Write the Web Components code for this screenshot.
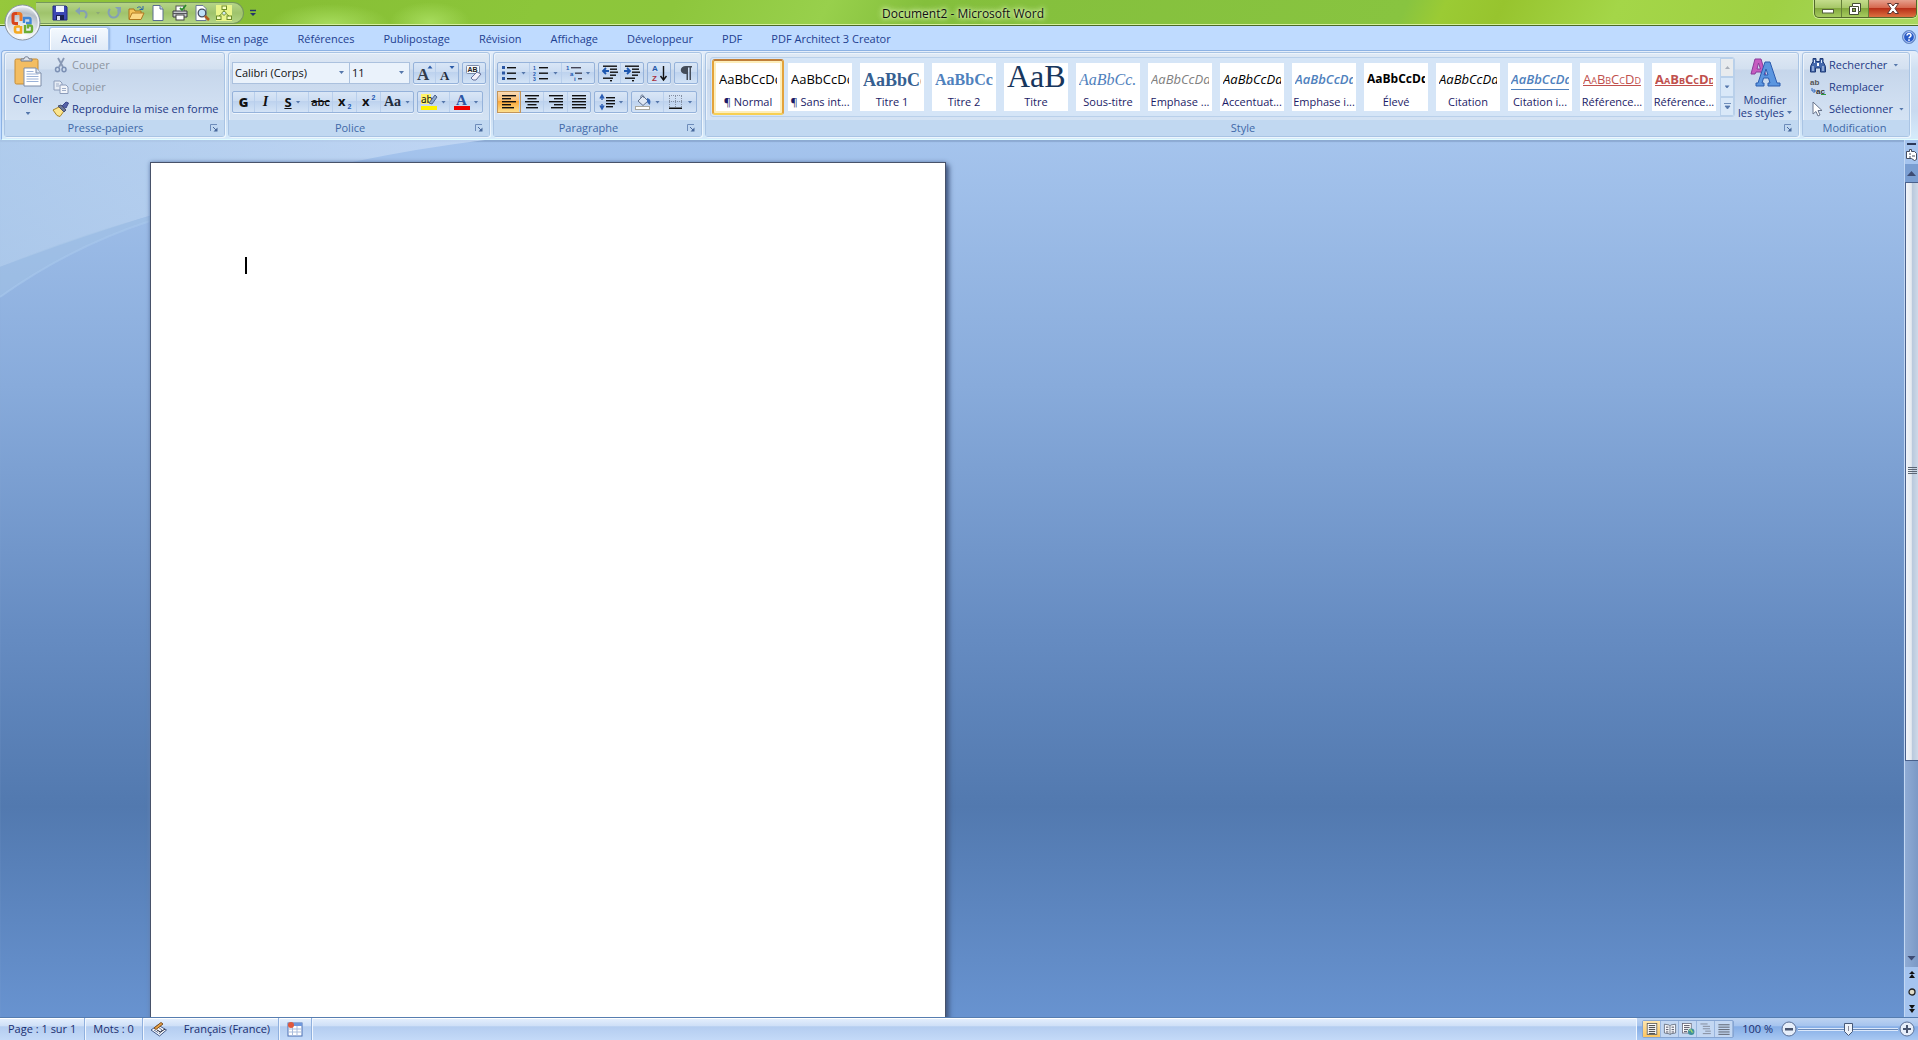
<!DOCTYPE html>
<html lang="fr">
<head>
<meta charset="utf-8">
<title>Document2 - Microsoft Word</title>
<style>
html,body{margin:0;height:100%}
body{font:11px/16px "Open Sans","Noto Sans",sans-serif;color:#1e3a86;overflow:hidden}
</style>
</head>
<body>
<word-app></word-app>
<script>
const RESET = `*{box-sizing:border-box}
button{font:inherit;color:inherit;background:none;border:0;padding:0;margin:0;display:flex;align-items:center;justify-content:center}
svg{display:block;flex:none;overflow:visible}`;

function define(tag, css, html) {
  customElements.define(tag, class extends HTMLElement {
    connectedCallback() {
      if (this.shadowRoot) return;
      const body = typeof html === 'function' ? html(this) : html;
      this.attachShadow({mode: 'open'}).innerHTML = `<style>${RESET}${css}</style>${body}`;
    }
  });
}

const lines = (rows, color = '#111') => rows.map(([x, y, w]) => `<rect x="${x}" y="${y}" width="${w}" height="1.4" fill="${color}"/>`).join('');
const letter = (t, x, y, size, extra = '') => `<text x="${x}" y="${y}" font-size="${size}" ${extra}>${t}</text>`;
const SERIF = 'font-family="Liberation Serif" font-weight="bold"';

const ICONS = {
  save: `<path d="M1 1h13l1 1v13H1z" fill="#3c46b4" stroke="#232a80"/><rect x="4" y="1" width="8" height="6" fill="#eef2ff"/><rect x="4" y="10" width="8" height="5" fill="#1b1f50"/><rect x="5" y="11" width="3" height="4" fill="#d8dcf4"/>`,
  undo: `<path d="M3 6h7a4 4 0 0 1 1 7" fill="none" stroke="#84a0b4" stroke-width="2"/><path d="M6 2L1 6l5 4z" fill="#84a0b4"/>`,
  redo: `<path d="M4 4a5 5 0 1 0 8 1" fill="none" stroke="#84a0b4" stroke-width="2.200"/><path d="M9 2h6v6z" fill="#84a0b4"/>`,
  open: `<path d="M1 14V4h5l1 2h6v3" fill="#f4c45a" stroke="#a8701c"/><path d="M1 14.500L4 8h12l-3 6.500z" fill="#fbd884" stroke="#b07820"/><path d="M9 3c2-2 4-1 5 1m1-3v3.500h-3.500" fill="none" stroke="#2e64a8"/>`,
  page: `<path d="M3 .5h7l3 3.500v11.500H3z" fill="#fff" stroke="#5a6c90"/><path d="M10 .5V4h3" fill="#cfdcf0" stroke="#5a6c90"/>`,
  print: `<rect x="4" y="1" width="8" height="6" fill="#fff" stroke="#555"/><path d="M1 6h14v6H1z" fill="#c6c8cc" stroke="#3c3c44"/><path d="M1 8.500h14" stroke="#54545c"/><rect x="4" y="10" width="8" height="5" fill="#fff" stroke="#444"/><path d="M8 3l2 2 4-5" fill="none" stroke="#2a8c2a" stroke-width="1.800"/>`,
  preview: `<path d="M2 .5h7l3 3v12H2z" fill="#fff" stroke="#6a7894"/><circle cx="8" cy="8" r="3.800" fill="#bfe0f8" stroke="#444c60" stroke-width="1.300"/><path d="M11 11l4 4" stroke="#b05c20" stroke-width="2.500"/>`,
  chart: `<rect width="16" height="16" fill="#e9f58a"/><g fill="#f6ffc0" stroke="#6c8c28"><rect x="6" y="1" width="4.500" height="3.500"/><rect x=".5" y="11" width="4.500" height="3.500"/><rect x="11" y="11" width="4.500" height="3.500"/><path d="M8 4.500v2M5.500 9L3 11M10.500 9L13 11"/><path d="M8 6l2.500 2L8 10.500 5.500 8z" fill="#cfe8f0"/></g>`,
  more: `<path d="M5 5.500h6" stroke="#24346c" stroke-width="1.400"/><path d="M5 8h6L8 11z" fill="#24346c"/>`,
  cut: `<path d="M5 1l5 9M11 1L6 10" stroke="#8898b4" stroke-width="1.800"/><ellipse cx="4.500" cy="12.500" rx="2" ry="2.300" fill="none" stroke="#7c90b4" stroke-width="1.500"/><ellipse cx="11" cy="12.500" rx="2" ry="2.300" fill="none" stroke="#7c90b4" stroke-width="1.500"/>`,
  copy: `<path d="M1 2h6l2 2v7H1z" fill="#e6ecf5" stroke="#8c9cba"/><path d="M7 6h6l2 2v6.500H7z" fill="#f2f5fa" stroke="#8c9cba"/><path d="M3 5h3M3 7h3M9 9.500h4M9 11.500h4" stroke="#a0aec8"/>`,
  brush: `<path d="M0 9l6-3 5 4-4 5.500-3-1z" fill="#fbe48c" stroke="#a98428"/><path d="M5 5l3-1 5 5-2 2z" fill="#6c7694" stroke="#4a5270"/><path d="M9 5l4-4 2.500 1L13 7z" fill="#5663a8" stroke="#39458c"/>`,
  find: `<path d="M3 1.500h3v3h4v-3h3v3l2.500 5v5.500h-5v-4H5.500v4h-5V9.500L3 4.500z" fill="#4468ac" stroke="#1f3a76"/><path d="M3 9v5M13 9v5M4.500 3v3M11.500 3v3" stroke="#dbe8fa"/><rect x="7" y="6" width="2" height="3" fill="#fff"/>`,
  replace: `${letter('ab', 0, 6, 8, 'fill="#555" font-weight="bold"')}${letter('ac', 6, 15, 8, 'fill="#333" font-weight="bold"')}<path d="M2 9v3h3m-1.500-2l2 2-2 2" fill="none" stroke="#2c62b8"/><rect x="11" y="15" width="5" height="1" fill="#2c9c3c"/>`,
  cursor: `<path d="M3 1v12l3-2.500 2 4.500 2-1-2-4.500h4z" fill="#fff" stroke="#68748c"/>`,
  grow: `${letter('A', 0, 15, 17, `fill="#333c4c" ${SERIF}`)}<path d="M10.500 3.500h5L13 .5z" fill="#2b5ba8"/>`,
  shrink: `${letter('A', 1, 15, 13, `fill="#222c3c" ${SERIF}`)}<path d="M10.500 1h5L13 4z" fill="#2b5ba8"/>`,
  clear: `<rect x=".5" y=".5" width="13" height="8" rx="1" fill="#f6f9fd" stroke="#7c8cab"/>${letter('AB', 1.5, 7, 7, 'fill="#222" font-weight="bold"')}<path d="M5 13l6-6 4 2-5 6H7z" fill="#f4f0fb" stroke="#66709a"/>`,
  sub: `${letter('x', 1, 12, 13, 'fill="#111" font-weight="bold" font-family="Noto Sans"')}${letter('2', 10.5, 15, 7, 'fill="#1d57b0" font-weight="bold"')}`,
  sup: `${letter('x', 1, 12, 13, 'fill="#111" font-weight="bold" font-family="Noto Sans"')}${letter('2', 10.5, 6, 7, 'fill="#1d57b0" font-weight="bold"')}`,
  hilite: `<rect x="0" y="0" width="10" height="10" fill="#fff36a"/>${letter('ab', 0, 8.5, 10, 'fill="#111" font-family="Noto Sans"')}<path d="M8 9l6-8 2 2-5 7z" fill="#8ea8cc" stroke="#4c628c"/><rect x="0" y="12" width="16" height="4" fill="#fff200"/>`,
  color: `${letter('A', 2, 11, 15, `fill="#2d56a4" ${SERIF}`)}<rect x="0" y="12" width="16" height="4" fill="#f00000"/>`,
  bullets: `<g fill="#2b57a4"><rect x="1" y="1" width="3" height="3"/><rect x="1" y="6.500" width="3" height="3"/><rect x="1" y="12" width="3" height="3"/></g>${lines([[6,2,9],[6,7.5,9],[6,13,9]])}`,
  numbers: `${letter('1', 0, 5, 5, 'fill="#1d57b0" font-weight="bold"')}${letter('2', 0, 10.5, 5, 'fill="#1d57b0" font-weight="bold"')}${letter('3', 0, 16, 5, 'fill="#1d57b0" font-weight="bold"')}${lines([[6,2,9],[6,7.5,9],[6,13,9]])}`,
  levels: `${letter('1', 0, 5, 6, 'fill="#1d57b0" font-weight="bold"')}${letter('a', 4, 10.5, 6, 'fill="#1d57b0" font-weight="bold"')}${letter('i', 8, 16, 6, 'fill="#1d57b0" font-weight="bold"')}${lines([[5,2,10],[9,7.5,7],[12,13,4]], '#445')}`,
  outdent: `${lines([[1,0.5,14],[8,3.5,7],[8,6.5,8],[8,9.5,6],[1,12.5,10],[8,15,2]])}<path d="M7 6H1m3-3L1 6l3 3" fill="none" stroke="#1d57b0" stroke-width="1.800"/>`,
  indent: `${lines([[1,0.5,14],[8,3.5,7],[8,6.5,8],[8,9.5,6],[1,12.5,10],[8,15,2]])}<path d="M0 6h6M3 3l3 3-3 3" fill="none" stroke="#1d57b0" stroke-width="1.800"/>`,
  sort: `${letter('A', 1, 6, 8, 'fill="#2458a8" font-weight="bold"')}${letter('Z', 1, 16, 8, 'fill="#a83040" font-weight="bold"')}<path d="M12.500 1v13M9.500 11l3 4 3-4" fill="none" stroke="#111" stroke-width="1.400"/>`,
  pilcrow: `<path d="M8 1h6v1.500h-1V15h-1.500V2.500H10V15H8.500V9C1 9.500 1 1 8 1z" fill="#444c58"/>`,
  left: lines([[1,1,14],[1,4,9],[1,7,14],[1,10,9],[1,13,12]]),
  center: lines([[1,1,14],[3.5,4,9],[1,7,14],[3.5,10,9],[2,13,12]]),
  right: lines([[1,1,14],[6,4,9],[1,7,14],[6,10,9],[3,13,12]]),
  justify: lines([[1,1,14],[1,4,14],[1,7,14],[1,10,14],[1,13,14]]),
  spacing: `<path d="M3 2v4M3 10v4M1 4.500L3 1l2 3.500M1 11.500L3 15l2-3.500" fill="none" stroke="#2b5db4" stroke-width="1.500"/>${lines([[7,3,9],[7,6,9],[7,9,9],[7,12,7]])}`,
  fill: `<path d="M3 7l5-5 5 5-5 4.500z" fill="#dfe8f4" stroke="#60708c"/><path d="M6 4c-1-4 3-4 3 0" fill="none" stroke="#60708c"/><path d="M12 4c4 1 4 4 2.500 7L12 8z" fill="#3566b4"/><rect x=".5" y="12.500" width="14" height="3" fill="#fff" stroke="#a8a8a0"/>`,
  borders: `<path d="M1.500 2v12M7.500 2v12M13.500 2v12M1 1.500h13M1 7.500h13" stroke="#8490a4" stroke-dasharray="1 1"/><rect x="1" y="13.500" width="13" height="1.500" fill="#111"/>`,
  proof: `<path d="M0 9l7-5 8.500 5-7 6z" fill="#f4f6fa" stroke="#445a88"/><path d="M7 6l4 3-3 4M3 9l4 2.500" stroke="#6b7a9c" fill="none"/><path d="M3 7l7-5.500L12 3 5 8.500z" fill="#eaa244" stroke="#7c4e20"/><path d="M6 9l3.500 2L14 8" stroke="#223" fill="none"/>`,
  macro: `<rect x="1" y="2" width="14" height="13" fill="#fff" stroke="#4c70b4"/><rect x="1" y="2" width="14" height="3" fill="#6f98dc"/><path d="M2 8h12M2 11h12M5.500 5v10M10 5v10" stroke="#a9bcdc"/><circle cx="4" cy="4" r="3" fill="#e0583c"/>`,
  vprint: `<rect x="2" y="1" width="12" height="14" fill="#fff" stroke="#555"/>${lines([[4,3,8],[4,5.5,8],[4,8,8],[4,10.5,8],[4,13,8]], '#555')}`,
  vread: `<path d="M1 2l6 1 1 1 1-1 6-1v11l-6 1-1 1-1-1-6-1zM8 4v11" fill="#f4f6fa" stroke="#5c6474"/>${lines([[3,5,3],[3,8,3],[3,11,3],[10,5,3],[10,8,3],[10,11,3]], '#667')}`,
  vweb: `<rect x="1" y="1" width="11" height="12" fill="#fff" stroke="#667"/>${lines([[3,3,7],[3,5.5,7],[3,8,5],[3,10.5,4]], '#667')}<circle cx="12" cy="11.500" r="4" fill="#3f8f9c"/><path d="M9.500 10c2-2 3 0 3 1s2 1 2 1" stroke="#9fd870" fill="none" stroke-width="1.500"/>`,
  vplan: lines([[1,1,9],[4,4,9],[4,7,9],[7,10,7],[4,13,10]], '#8c96a8'),
  vdraft: lines([[1,2,14],[1,5,14],[1,8,14],[1,11,14],[1,14,14]], '#68707e'),
};
define('w-icon', ':host{display:block;flex:none}', el =>
  `<svg width="16" height="16" viewBox="0 0 16 16" font-family="Liberation Sans" aria-hidden="true">${ICONS[el.getAttribute('name')]}</svg>`);

define('drop-arrow', ':host{display:block;width:5px;height:3px;flex:none;background:#5577ab;clip-path:polygon(0 0,100% 0,50% 100%)}', '');

define('tool-button', `
:host{display:flex;width:22px}
:host([size=m]){width:24px}
:host([arrow]){width:32px}
button{flex:1;gap:4px;color:#111;border-right:1px solid #b9cfec}
:host(:last-child) button{border-right:0}
:host([active]) button{background:linear-gradient(#fbdbb5,#fdbd6a 45%,#fba637 46%,#fddf8c);box-shadow:0 0 0 1px #c3955a}
`, el => `<button type="button" aria-label="${el.getAttribute('label')}">${
  el.hasAttribute('icon') ? `<w-icon name="${el.getAttribute('icon')}"></w-icon>` : '<slot></slot>'}${
  el.hasAttribute('arrow') ? '<drop-arrow></drop-arrow>' : ''}</button>`);

define('tool-cluster', `
:host{display:flex;height:22px;border:1px solid #95b2da;border-radius:2px;background:linear-gradient(#d9e6f6,#cbdcf2 45%,#bdd2ee 46%,#d3e3f6);box-shadow:0 1px #eef5fd}`, '<slot></slot>');

define('ribbon-group', `
:host{display:flex;flex-direction:column;flex:none;border:1px solid #a9c4e4;border-radius:3px;box-shadow:inset 1px 1px #ecf3fb,1px 1px #eef6fd;background:linear-gradient(#dfe9f5,#d3e0f0 16px,#c6d6eb 17px,#d9e7f7)}
:host([grow]){flex:1;min-width:0}
.body{flex:1;display:flex;padding:0 3px;min-width:0}
.foot{display:flex;flex:none;height:16px;align-items:center;background:#c1d8f1;color:#3f68a8;padding-right:3px}
.foot span{flex:1;text-align:center}
.foot button{width:15px;height:15px}`, el => `
<div class="body"><slot></slot></div>
<div class="foot"><span>${el.getAttribute('name')}</span>${el.hasAttribute('plain') ? '' : `<button type="button" aria-label="Options ${el.getAttribute('name')}"><svg width="8" height="8" viewBox="0 0 8 8"><path d="M.5 7V.5H7" fill="none" stroke="#6d8cba"/><path d="M3 3l3 3" stroke="#48689c"/><path d="M7.500 3.500v4h-4z" fill="#48689c"/></svg></button>`}</div>`);

define('small-command', `
:host{display:flex;height:22px}
:host([off]){color:#8d95a1}
button{gap:3px;white-space:nowrap}
drop-arrow{margin-left:3px}`, el => `<button type="button"${el.hasAttribute('off') ? ' disabled' : ''}><w-icon name="${el.getAttribute('icon')}"></w-icon><slot></slot>${el.hasAttribute('arrow') ? '<drop-arrow></drop-arrow>' : ''}</button>`);

define('clipboard-group', `
:host{display:flex;flex:none}
ribbon-group{width:221px}
.paste{width:40px;flex:none;flex-direction:column;justify-content:flex-start;padding-top:3px}
.paste span{margin:4px 0 5px}
.list{padding:1px 0 0 5px}`, `
<ribbon-group name="Presse-papiers">
<button class="paste" type="button">
<svg width="28" height="31" viewBox="0 0 28 31"><rect x="1" y="3" width="23" height="25" rx="1.500" fill="#f3bd62" stroke="#c58c34"/><path d="M7 5V3h3c0-3 5-3 5 0h3v2z" fill="#dfe3ea" stroke="#6c7890"/><path d="M10 12h12l5 5v13H10z" fill="#fff" stroke="#7c8ca8"/><path d="M22 12v5h5" fill="#dbe5f3" stroke="#7c8ca8"/><path d="M12.500 18h12M12.500 20.500h12M12.500 23h12M12.500 25.500h12M12.500 15.500h7" stroke="#9bb2d8"/></svg>
<span>Coller</span><drop-arrow></drop-arrow></button>
<div class="list">
<small-command icon="cut" off>Couper</small-command>
<small-command icon="copy" off>Copier</small-command>
<small-command icon="brush">Reproduire la mise en forme</small-command>
</div></ribbon-group>`);

const ROWS = `.rows{display:flex;flex-direction:column;gap:7px;padding-top:9px}.row{display:flex;gap:3px}`;

define('font-group', `
:host{display:flex;flex:none}${ROWS}
.combos{display:flex;width:178px;height:22px}
.combo{position:relative;display:flex;align-items:center;border:1px solid #abc1de;background:#eaf2fb;width:118px}
.combo+.combo{width:60px;border-left:0}
select{appearance:none;font:inherit;color:#111;background:none;border:0;width:100%;height:20px;padding:0 0 0 2px;outline:0}
.combo drop-arrow{position:absolute;right:5px;top:8px;pointer-events:none}
b,i,u,s{font-size:13px;font-family:"Open Sans",sans-serif}
b{font-weight:800}
i{font:italic bold 14px "Liberation Serif",serif}
u{font-weight:700}
s{font-size:11px;font-weight:600}
em{font:bold 14px "Liberation Serif",serif;color:#222c3c}`, `
<ribbon-group name="Police"><div class="rows">
<div class="row">
<div class="combos"><div class="combo"><select aria-label="Police"><option>Calibri (Corps)</option></select><drop-arrow></drop-arrow></div>
<div class="combo"><select aria-label="Taille"><option>11</option></select><drop-arrow></drop-arrow></div></div>
<tool-cluster><tool-button icon="grow" label="Agrandir la police"></tool-button><tool-button icon="shrink" label="Réduire la police"></tool-button></tool-cluster>
<tool-cluster><tool-button icon="clear" label="Effacer la mise en forme"></tool-button></tool-cluster>
</div>
<div class="row">
<tool-cluster>
<tool-button label="Gras"><b>G</b></tool-button>
<tool-button label="Italique"><i>I</i></tool-button>
<tool-button label="Souligné" arrow><u>S</u></tool-button>
<tool-button label="Barré" size="m"><s>abc</s></tool-button>
<tool-button icon="sub" label="Indice" size="m"></tool-button>
<tool-button icon="sup" label="Exposant" size="m"></tool-button>
<tool-button label="Modifier la casse" arrow><em>Aa</em></tool-button>
</tool-cluster>
<tool-cluster><tool-button icon="hilite" label="Surlignage" arrow></tool-button><tool-button icon="color" label="Couleur de police" arrow></tool-button></tool-cluster>
</div></div></ribbon-group>`);

define('paragraph-group', `:host{display:flex;flex:none}${ROWS}`, `
<ribbon-group name="Paragraphe"><div class="rows">
<div class="row">
<tool-cluster><tool-button icon="bullets" label="Puces" arrow></tool-button><tool-button icon="numbers" label="Numérotation" arrow></tool-button><tool-button icon="levels" label="Liste à plusieurs niveaux" arrow></tool-button></tool-cluster>
<tool-cluster><tool-button icon="outdent" label="Diminuer le retrait"></tool-button><tool-button icon="indent" label="Augmenter le retrait"></tool-button></tool-cluster>
<tool-cluster><tool-button icon="sort" label="Trier"></tool-button></tool-cluster>
<tool-cluster><tool-button icon="pilcrow" label="Afficher tout"></tool-button></tool-cluster>
</div>
<div class="row">
<tool-cluster><tool-button icon="left" label="Aligner à gauche" active></tool-button><tool-button icon="center" label="Centrer" size="m"></tool-button><tool-button icon="right" label="Aligner à droite" size="m"></tool-button><tool-button icon="justify" label="Justifier"></tool-button></tool-cluster>
<tool-cluster><tool-button icon="spacing" label="Interligne" arrow></tool-button></tool-cluster>
<tool-cluster><tool-button icon="fill" label="Trame de fond" arrow></tool-button><tool-button icon="borders" label="Bordures" arrow></tool-button></tool-cluster>
</div></div></ribbon-group>`);

define('style-tile', `
:host{display:flex;box-sizing:border-box;width:72px;height:56px;padding:4px;flex:none}
:host([active]){padding:2px;border:2px solid #e3a33c;border-top-color:#c07f38;border-bottom-color:#f7cf52;border-radius:3px;background:#fdeebb}
button{flex:1;flex-direction:column;justify-content:space-between;background:#fff;min-width:0;padding:3px 3px 1px;color:#1b1b66}
.sample{width:100%;height:28px;line-height:26px;overflow:hidden;white-space:nowrap;text-align:left;color:#000;font-size:13px}
.name{white-space:nowrap}
.s-h1{font:bold 18px/28px "Liberation Serif",serif;color:#365f91}
.s-h2{font:bold 16px/28px "Liberation Serif",serif;color:#4f81bd}
.s-title{font:32px/20px "Liberation Serif",serif;color:#17365d}
.s-sub{font:italic 16px/28px "Liberation Serif",serif;color:#4f81bd}
.s-soft{font-style:italic;color:#808080}
.s-it{font-style:italic}
.s-int{font-style:italic;font-weight:600;color:#4f81bd}
.s-bold{font-weight:700;font-size:12px}
.s-quote{font-style:italic;font-weight:600;color:#4f81bd;height:24px;border-bottom:1px solid #4f81bd;margin-bottom:4px}
.s-ref,.s-refb{font-variant:small-caps;text-decoration:underline;color:#c0504d}
.s-refb{font-weight:700}`, el => `<button type="button"><span class="sample s-${el.getAttribute('kind')}">${el.getAttribute('sample') || 'AaBbCcDd'}</span><span class="name"><slot></slot></span></button>`);

define('style-group', `
:host{display:flex;flex:1;min-width:0}
.gallery{flex:1;min-width:0;height:60px;margin:4px 0 0 1px;padding:1px;display:flex;border:1px solid #b9d0ea;border-radius:3px;background:#d5e5f7;overflow:hidden}
.tiles{display:flex;flex:1;min-width:0;overflow:hidden}
.scroll{display:flex;flex-direction:column;width:14px;flex:none;margin:-1px -1px -1px 0}
.scroll button{flex:1;border:1px solid #b9d0ea;background:#d9e8f8}
.scroll button:first-child{background:#e8ebee}
.scroll button:first-child drop-arrow{background:#a8aeb8}
.up{transform:rotate(180deg)}
.change{width:60px;flex:none;flex-direction:column;justify-content:flex-start;padding-top:5px;line-height:13px}
.change span{margin-top:6px;white-space:nowrap}
.change drop-arrow{display:inline-block;margin:0 0 3px 3px}`, `
<ribbon-group name="Style" grow>
<div class="gallery"><div class="tiles">
<style-tile kind="n" active>¶ Normal</style-tile>
<style-tile kind="n">¶ Sans int...</style-tile>
<style-tile kind="h1">Titre 1</style-tile>
<style-tile kind="h2" sample="AaBbCc">Titre 2</style-tile>
<style-tile kind="title" sample="AaB">Titre</style-tile>
<style-tile kind="sub" sample="AaBbCc.">Sous-titre</style-tile>
<style-tile kind="soft">Emphase ...</style-tile>
<style-tile kind="it">Accentuat...</style-tile>
<style-tile kind="int">Emphase i...</style-tile>
<style-tile kind="bold">Élevé</style-tile>
<style-tile kind="it">Citation</style-tile>
<style-tile kind="quote">Citation i...</style-tile>
<style-tile kind="ref">Référence...</style-tile>
<style-tile kind="refb">Référence...</style-tile>
</div>
<div class="scroll"><button type="button" aria-label="Ligne précédente"><drop-arrow class="up"></drop-arrow></button><button type="button" aria-label="Ligne suivante"><drop-arrow></drop-arrow></button><button type="button" aria-label="Autres"><svg width="7" height="7" viewBox="0 0 7 7"><path d="M0 .5h7M1 3h5L3.500 6z" fill="#5577ab" stroke="#5577ab" stroke-width=".8"/></svg></button></div></div>
<button class="change" type="button">
<svg width="30" height="29" viewBox="0 0 30 29"><path d="M5 1h6l5 17h-4l-1-4H6l-1 2H1zM8.500 5L7 11h3.500z" fill="#c65cc0" stroke="#8a3c9a"/><path d="M15 4h5l7 21h3v3H18v-3h2l-1.500-5h-5L12 25h2v3H6v-3h2zM16 11l-2 6h4z" fill="#5b96e0" stroke="#2c5cae"/></svg>
<span>Modifier<br>les styles<drop-arrow></drop-arrow></span></button>
</ribbon-group>`);

define('edit-group', `:host{display:flex;flex:none}ribbon-group{width:108px}.list{padding:1px 0 0 4px}`, `
<ribbon-group name="Modification" plain><div class="list">
<small-command icon="find" arrow>Rechercher</small-command>
<small-command icon="replace">Remplacer</small-command>
<small-command icon="cursor" arrow>Sélectionner</small-command>
</div></ribbon-group>`);

define('ribbon-tab', `
:host{display:flex;height:23px}
a{display:flex;align-items:center;padding:0 11px;border:1px solid transparent;border-bottom:0;border-radius:3px 3px 0 0;color:#1e4090;text-decoration:none;white-space:nowrap}
:host([active]) a{background:linear-gradient(#f4f9fe,#dfeaf7);border-color:#a5c4ee;box-shadow:inset 1px 1px #fff,1px 0 2px #8fb0dc}`, el => `<a href="#" role="tab"${el.hasAttribute('active') ? ' aria-selected="true"' : ''}><slot></slot></a>`);

define('ribbon-bar', `
:host{display:block;background:#bfdbff}
nav{display:flex;gap:5px;height:24px;align-items:flex-end;padding:0 2px 0 49px}
nav button{margin:0 0 6px auto}
.panel{display:flex;gap:3px;height:90px;padding:1px 8px 2px 2px;margin-left:1px;border:1px solid #8db2e3;border-right:0;border-bottom:1px solid #dffcff;border-radius:4px 4px 0 0;background:linear-gradient(#e5eefa,#d0e0f2 18px,#c9daf0 60px,#d6ebfb)}`, `
<nav role="tablist">
<ribbon-tab active>Accueil</ribbon-tab><ribbon-tab>Insertion</ribbon-tab><ribbon-tab>Mise en page</ribbon-tab><ribbon-tab>Références</ribbon-tab><ribbon-tab>Publipostage</ribbon-tab><ribbon-tab>Révision</ribbon-tab><ribbon-tab>Affichage</ribbon-tab><ribbon-tab>Développeur</ribbon-tab><ribbon-tab>PDF</ribbon-tab><ribbon-tab>PDF Architect 3 Creator</ribbon-tab>
<button type="button" aria-label="Aide"><svg width="14" height="14" viewBox="0 0 14 14"><circle cx="7" cy="7" r="6.500" fill="#2a5cc8" stroke="#6d8fc4"/><circle cx="7" cy="7" r="5.400" fill="none" stroke="#e8f1ff" stroke-width=".8"/><path d="M5 5.500c0-2.800 4.200-2.600 4 0 0 1.300-2 1.400-2 2.700" fill="none" stroke="#fff" stroke-width="1.500"/><rect x="6.200" y="9.300" width="1.600" height="1.600" fill="#fff"/></svg></button>
</nav>
<div class="panel"><clipboard-group></clipboard-group><font-group></font-group><paragraph-group></paragraph-group><style-group></style-group><edit-group></edit-group></div>`);

define('title-bar', `
:host{display:flex;box-sizing:border-box;height:26px;position:relative;align-items:flex-start;border-bottom:1px solid #4a6a26;box-shadow:inset 0 -1px #d6efa0;
background:radial-gradient(60px 20px at 330px 24px,#a6db5c,transparent),radial-gradient(40px 20px at 430px 22px,#a6db5c,transparent),linear-gradient(115deg,#96c83c 0,#86bd34 12%,#8cc63a 28%,#8dc63c 35%,#98d04c 43%,#84bf3c 48%,#88c440 73%,#9bcb34 75%,#97c42e 78%,#a4d648 84%,#9fd044 92%,#a8d860)}
.qat{display:flex;height:22px;margin:2px 0 0 36px;padding:0 8px 0 13px;align-items:center;border:1px solid #76985c;border-left:0;border-radius:0 11px 11px 0;background:linear-gradient(#b5d488,#9fc36c 50%,#b3d585)}
.qat button{width:22px;height:18px}
.qat .thin{width:10px}
.thin drop-arrow{background:#8da878}
.more{width:18px;height:22px;margin-top:2px}
h1{position:absolute;left:0;right:0;top:5px;margin:0;padding-left:8px;text-align:center;pointer-events:none;font:12px/17px "Open Sans",sans-serif;color:#111;text-shadow:0 0 6px #dff5b8,0 0 6px #dff5b8,0 0 3px #dff5b8;white-space:nowrap}
.win{display:flex;height:18px;margin:0 1px 0 auto;border:1px solid #52682c;border-top:0;border-radius:0 0 5px 5px;overflow:hidden;box-shadow:0 0 0 1px #cdea94;background:linear-gradient(#c4dd8c,#a5c666 48%,#83a93e 50%,#a6cb5e)}
.win button{width:27px;border-right:1px solid #66803a}
.win .close{width:47px;border:0;background:linear-gradient(#e6a08c,#d5644a 48%,#b83018 50%,#dc7040)}
.orb{position:absolute;left:4px;top:4px;z-index:2}`, `
<div class="qat">
<button type="button" aria-label="Enregistrer"><w-icon name="save"></w-icon></button>
<button type="button" aria-label="Annuler"><w-icon name="undo"></w-icon></button>
<button type="button" class="thin" aria-label="Historique"><drop-arrow></drop-arrow></button>
<button type="button" aria-label="Répéter"><w-icon name="redo"></w-icon></button>
<button type="button" aria-label="Ouvrir"><w-icon name="open"></w-icon></button>
<button type="button" aria-label="Nouveau"><w-icon name="page"></w-icon></button>
<button type="button" aria-label="Imprimer"><w-icon name="print"></w-icon></button>
<button type="button" aria-label="Aperçu"><w-icon name="preview"></w-icon></button>
<button type="button" aria-label="Organigramme"><w-icon name="chart"></w-icon></button>
</div>
<button type="button" class="more" aria-label="Personnaliser"><w-icon name="more"></w-icon></button>
<h1>Document2 - Microsoft Word</h1>
<div class="win">
<button type="button" aria-label="Réduire"><svg width="12" height="12" viewBox="0 0 12 12"><rect x=".5" y="6.500" width="11" height="3.500" fill="#fff" stroke="#55603c"/></svg></button>
<button type="button" aria-label="Restaurer"><svg width="12" height="12" viewBox="0 0 12 12"><path d="M3.500 .5h8v8h-2v3h-9v-8h3z" fill="#fff" stroke="#444c34"/><rect x="3.500" y="5.500" width="3" height="3" fill="#8cae50" stroke="#444c34"/><path d="M9.500 8V3.500H4" fill="none" stroke="#444c34"/></svg></button>
<button type="button" class="close" aria-label="Fermer"><svg width="12" height="11" viewBox="0 0 12 11"><path d="M.5 .5h3.500L6 3l2-2.500h3.500L8 5.500l3.500 5H8L6 8l-2 2.500H.5L4 5.500z" fill="#fff" stroke="#5c3430"/></svg></button>
</div>
<button type="button" class="orb" aria-label="Bouton Office"><svg width="37" height="37" viewBox="0 0 37 37"><defs><radialGradient id="o" cx=".5" cy=".9" r=".9"><stop offset="0" stop-color="#fff"/><stop offset=".45" stop-color="#dfe4ea"/><stop offset=".75" stop-color="#b4bdc8"/><stop offset="1" stop-color="#f4f6f8"/></radialGradient></defs>
<circle cx="18.500" cy="18.500" r="17.500" fill="url(#o)" stroke="#8892a0"/><circle cx="18.500" cy="18.500" r="16" fill="none" stroke="#f2f5f8" stroke-width="1.500"/>
<g fill="none" stroke-width="3"><path d="M14 19.500h-3q-2 0-2-2v-6q0-2 2-2h3" stroke="#d8441c"/><path d="M13 9.500h2q2 0 2 2V17" stroke="#ee7a28"/><path d="M20 19v-5h5q1.500 0 1.500 1.500V19H22" stroke="#3f86d8" stroke-width="2.400"/><path d="M17 22v6.500h-4q-2 0-2-2V24q0-1.500 2-1.500h3" stroke="#f4a820" stroke-width="2.600"/><path d="M21 21v7h5q2 0 2-2v-3q0-1.500-2-1.500h-2v3" stroke="#6cae34" stroke-width="2.400"/></g></svg></button>`);

define('scroll-column', `
:host{display:flex;box-sizing:border-box;flex-direction:column;width:14px;background:#a5c4ef;border-left:1px solid #c3d8f4}
.tools{display:flex;flex-direction:column;align-items:center;height:24px;padding-top:3px;gap:4px}
.tools i{width:9px;height:2px;background:#2c3858}
.up,.down{height:18px;background:#7a9ed2}
.up drop-arrow,.down drop-arrow{width:9px;height:5px;background:#3e4c74}
.up drop-arrow{transform:rotate(180deg)}
.track{flex:1;display:flex;flex-direction:column;background:linear-gradient(90deg,#8fabd4,#7b99c6)}
.thumb{flex:578;border:1px solid #4a618c;border-right:0;background:linear-gradient(90deg,#f2f5fa,#e4e9ef 45%,#b9c8dc 50%,#cdd9e8);display:flex;align-items:center;justify-content:center}
.rest{flex:189}
.down{background:none}
.nav{height:50px;display:flex;flex-direction:column;justify-content:space-around;align-items:center}`, `
<div class="tools"><i></i><svg width="12" height="12" viewBox="0 0 12 12"><path d="M.5 2.500h3v-2h2v2h3l2 2v6l-2 1-3-2h-5z" fill="#fff" stroke="#444c60"/><path d="M3 5h2M6 7h3M3 8h2" stroke="#444c60"/></svg></div>
<button class="up" type="button" aria-label="Haut"><drop-arrow></drop-arrow></button>
<div class="track"><div class="thumb"><svg width="9" height="8" viewBox="0 0 9 8"><path d="M0 .5h9M0 2.500h9M0 4.500h9M0 6.500h9" stroke="#5c6674"/></svg></div><div class="rest"></div><button class="down" type="button" aria-label="Bas"><drop-arrow></drop-arrow></button></div>
<div class="nav"><button type="button" aria-label="Page précédente"><svg width="6" height="8" viewBox="0 0 6 8"><path d="M3 0l3 3H0zM3 3l3 4H0z" fill="#111"/></svg></button><button type="button" aria-label="Parcourir"><svg width="8" height="8" viewBox="0 0 8 8"><circle cx="4" cy="4" r="3" fill="#e0dcc8" stroke="#222" stroke-width="1.300"/></svg></button><button type="button" aria-label="Page suivante"><svg width="6" height="8" viewBox="0 0 6 8"><path d="M3 4L0 0h6zM3 8L0 4h6z" fill="#111"/></svg></button></div>`);

define('doc-surface', `
:host{display:flex;flex:1;min-height:0;background:linear-gradient(#a5c4ed,#88abdb 28%,#668cc2 56%,#5279af 76%,#6893d0)}
.view{flex:1;min-width:0;position:relative;overflow:hidden;box-shadow:inset 0 2px 1px #8caad2}
.sweep{position:absolute;left:0;top:0}
.page{box-sizing:border-box;position:relative;width:796px;height:1123px;margin:22px 0 0 150px;padding:94px;background:#fff;border:1px solid #48526a;box-shadow:3px 3px 5px #40567e,0 0 4px #6f8cb8;outline:0}
.caret{width:2px;height:17px;background:#000}`, `
<div class="view"><svg class="sweep" width="500" height="158" viewBox="0 0 500 158"><defs><linearGradient id="a" x1="0" x2="1"><stop offset="0" stop-color="#b4cfed" stop-opacity=".7"/><stop offset="1" stop-color="#c6daf5" stop-opacity=".8"/></linearGradient></defs>
<path d="M0 0H485Q420 8 352 22Q160 66 0 127z" fill="url(#a)"/><path d="M0 127Q76 96 150 76V81Q70 107 0 157z" fill="#a4c3e6" opacity=".5"/><path d="M0 157Q70 107 150 81" fill="none" stroke="#a9c8ec" stroke-width="2" opacity=".6"/></svg>
<div class="page" role="textbox" aria-label="Document" tabindex="0"><div class="caret"></div></div></div>
<scroll-column></scroll-column>`);

define('status-bar', `
:host{display:flex;box-sizing:border-box;height:23px;border-top:1px solid #567db0;background:linear-gradient(#e6f0fd,#cfe0f7 35%,#b4cdf0 40%,#c4daf8);color:#1b2f70;box-shadow:inset 0 1px #fff}
.cell{padding:0 8px;border-right:1px solid #8fb0de;box-shadow:1px 0 #f0f6fe;height:22px;white-space:nowrap}
.lang{gap:17px}
.right{display:flex;align-items:center;margin-left:auto;padding:0 3px 0 5px;border-left:1px solid #f0f6fe;background:linear-gradient(#bdd3f2,#a6c4ee 35%,#86aee6 40%,#a8c8f2)}
.views{display:flex;height:18px;border:1px solid #86a5d2;border-radius:2px;background:#c3d7f2}
.views button{width:18px;border-right:1px solid #9ab6de}
.views w-icon{transform:scale(.8)}
.views button:first-child{background:linear-gradient(#fde6b0,#fbc560)}
.zoom{margin:0 8px}
input{appearance:none;width:100px;height:18px;margin:0 1px;background:linear-gradient(#6888b8,#6888b8) center/100% 1px no-repeat,linear-gradient(#dbe8fb,#dbe8fb) center/100% 3px no-repeat}
input::-webkit-slider-thumb{appearance:none;width:9px;height:13px;background:url("data:image/svg+xml,%3Csvg xmlns='http://www.w3.org/2000/svg' viewBox='0 0 9 13'%3E%3Cpath d='M.5.5h8v8l-4 4-4-4z' fill='%23eef3fa' stroke='%23465878'/%3E%3Cpath d='M4.500 3v5' stroke='%23889'/%3E%3C/svg%3E")}`, `
<button class="cell" type="button">Page : 1 sur 1</button>
<button class="cell" type="button">Mots : 0</button>
<button class="cell lang" type="button"><w-icon name="proof"></w-icon>Français (France)</button>
<button class="cell" type="button" aria-label="Macro"><w-icon name="macro"></w-icon></button>
<div class="right"><div class="views">
<button type="button" aria-label="Page"><w-icon name="vprint"></w-icon></button><button type="button" aria-label="Lecture"><w-icon name="vread"></w-icon></button><button type="button" aria-label="Web"><w-icon name="vweb"></w-icon></button><button type="button" aria-label="Plan"><w-icon name="vplan"></w-icon></button><button type="button" aria-label="Brouillon"><w-icon name="vdraft"></w-icon></button></div>
<button class="zoom" type="button">100 %</button>
<button type="button" aria-label="Zoom arrière"><svg width="16" height="16" viewBox="0 0 16 16"><circle cx="8" cy="8" r="7" fill="#e6eefa" stroke="#5a6f96"/><rect x="4" y="7" width="8" height="2.500" fill="#4a5670"/></svg></button>
<input type="range" aria-label="Zoom" min="0" max="100" value="50">
<button type="button" aria-label="Zoom avant"><svg width="16" height="16" viewBox="0 0 16 16"><circle cx="8" cy="8" r="7" fill="#e6eefa" stroke="#5a6f96"/><path d="M7 4h2v3h3v2H9v3H7V9H4V7h3z" fill="#4a5670"/></svg></button>
</div>`);

define('word-app', ':host{display:flex;flex-direction:column;height:100vh;min-width:1200px}', `
<title-bar></title-bar><ribbon-bar></ribbon-bar><doc-surface></doc-surface><status-bar></status-bar>`);
</script>
</body>
</html>
